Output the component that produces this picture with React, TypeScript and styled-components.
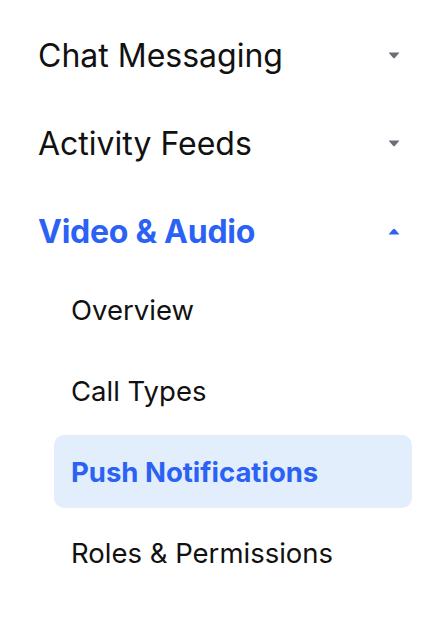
import React from "react";
import styled, { createGlobalStyle } from "styled-components";

const Global = createGlobalStyle`
  html, body { margin: 0; padding: 0; background: #ffffff; }
  body { font-family: Inter, "Noto Sans", sans-serif; -webkit-font-smoothing: antialiased; }
`;

const Nav = styled.nav`
  width: 432px;
  box-sizing: border-box;
  padding: 11px 20px 0 38px;
  display: flex;
  flex-direction: column;
`;

const Section = styled.div`
  display: flex;
  flex-direction: column;
`;

const Header = styled.div<{ $active?: boolean }>`
  display: flex;
  align-items: center;
  justify-content: space-between;
  height: 88px;
  padding-right: 12px;
  font-size: 32px;
  font-weight: ${(p) => (p.$active ? 700 : 400)};
  letter-spacing: ${(p) => (p.$active ? "-0.25px" : "0")};
  color: ${(p) => (p.$active ? "#2b62f5" : "#111111")};
`;

const SubList = styled.div`
  display: flex;
  flex-direction: column;
  padding-left: 16px;
  margin-top: -2px;
  gap: 8px;
`;

const SubItem = styled.div<{ $active?: boolean }>`
  display: flex;
  align-items: center;
  height: 73px;
  padding-left: 17px;
  border-radius: 10px;
  font-size: 27.5px;
  font-weight: ${(p) => (p.$active ? 700 : 400)};
  color: ${(p) => (p.$active ? "#2b62f5" : "#111111")};
  background: ${(p) => (p.$active ? "#e2eefc" : "transparent")};
`;

const Caret = ({ up, color }: { up?: boolean; color: string }) => (
  <svg width="12" height="7" viewBox="0 0 12 7">
    {up ? (
      <path d="M0.5 6.5 L5 1.3 Q6 0.3 7 1.3 L11.5 6.5 Z" fill={color} />
    ) : (
      <path d="M0.5 0.5 L11.5 0.5 L7 5.7 Q6 6.7 5 5.7 Z" fill={color} />
    )}
  </svg>
);

export default function App() {
  return (
    <>
      <Global />
      <Nav>
        <Section>
          <Header>
            <span>Chat Messaging</span>
            <Caret color="#6b6e76" />
          </Header>
        </Section>
        <Section>
          <Header>
            <span>Activity Feeds</span>
            <Caret color="#6b6e76" />
          </Header>
        </Section>
        <Section>
          <Header $active>
            <span>Video &amp; Audio</span>
            <Caret up color="#2b62f5" />
          </Header>
          <SubList>
            <SubItem>Overview</SubItem>
            <SubItem>Call Types</SubItem>
            <SubItem $active>Push Notifications</SubItem>
            <SubItem>Roles &amp; Permissions</SubItem>
          </SubList>
        </Section>
      </Nav>
    </>
  );
}
